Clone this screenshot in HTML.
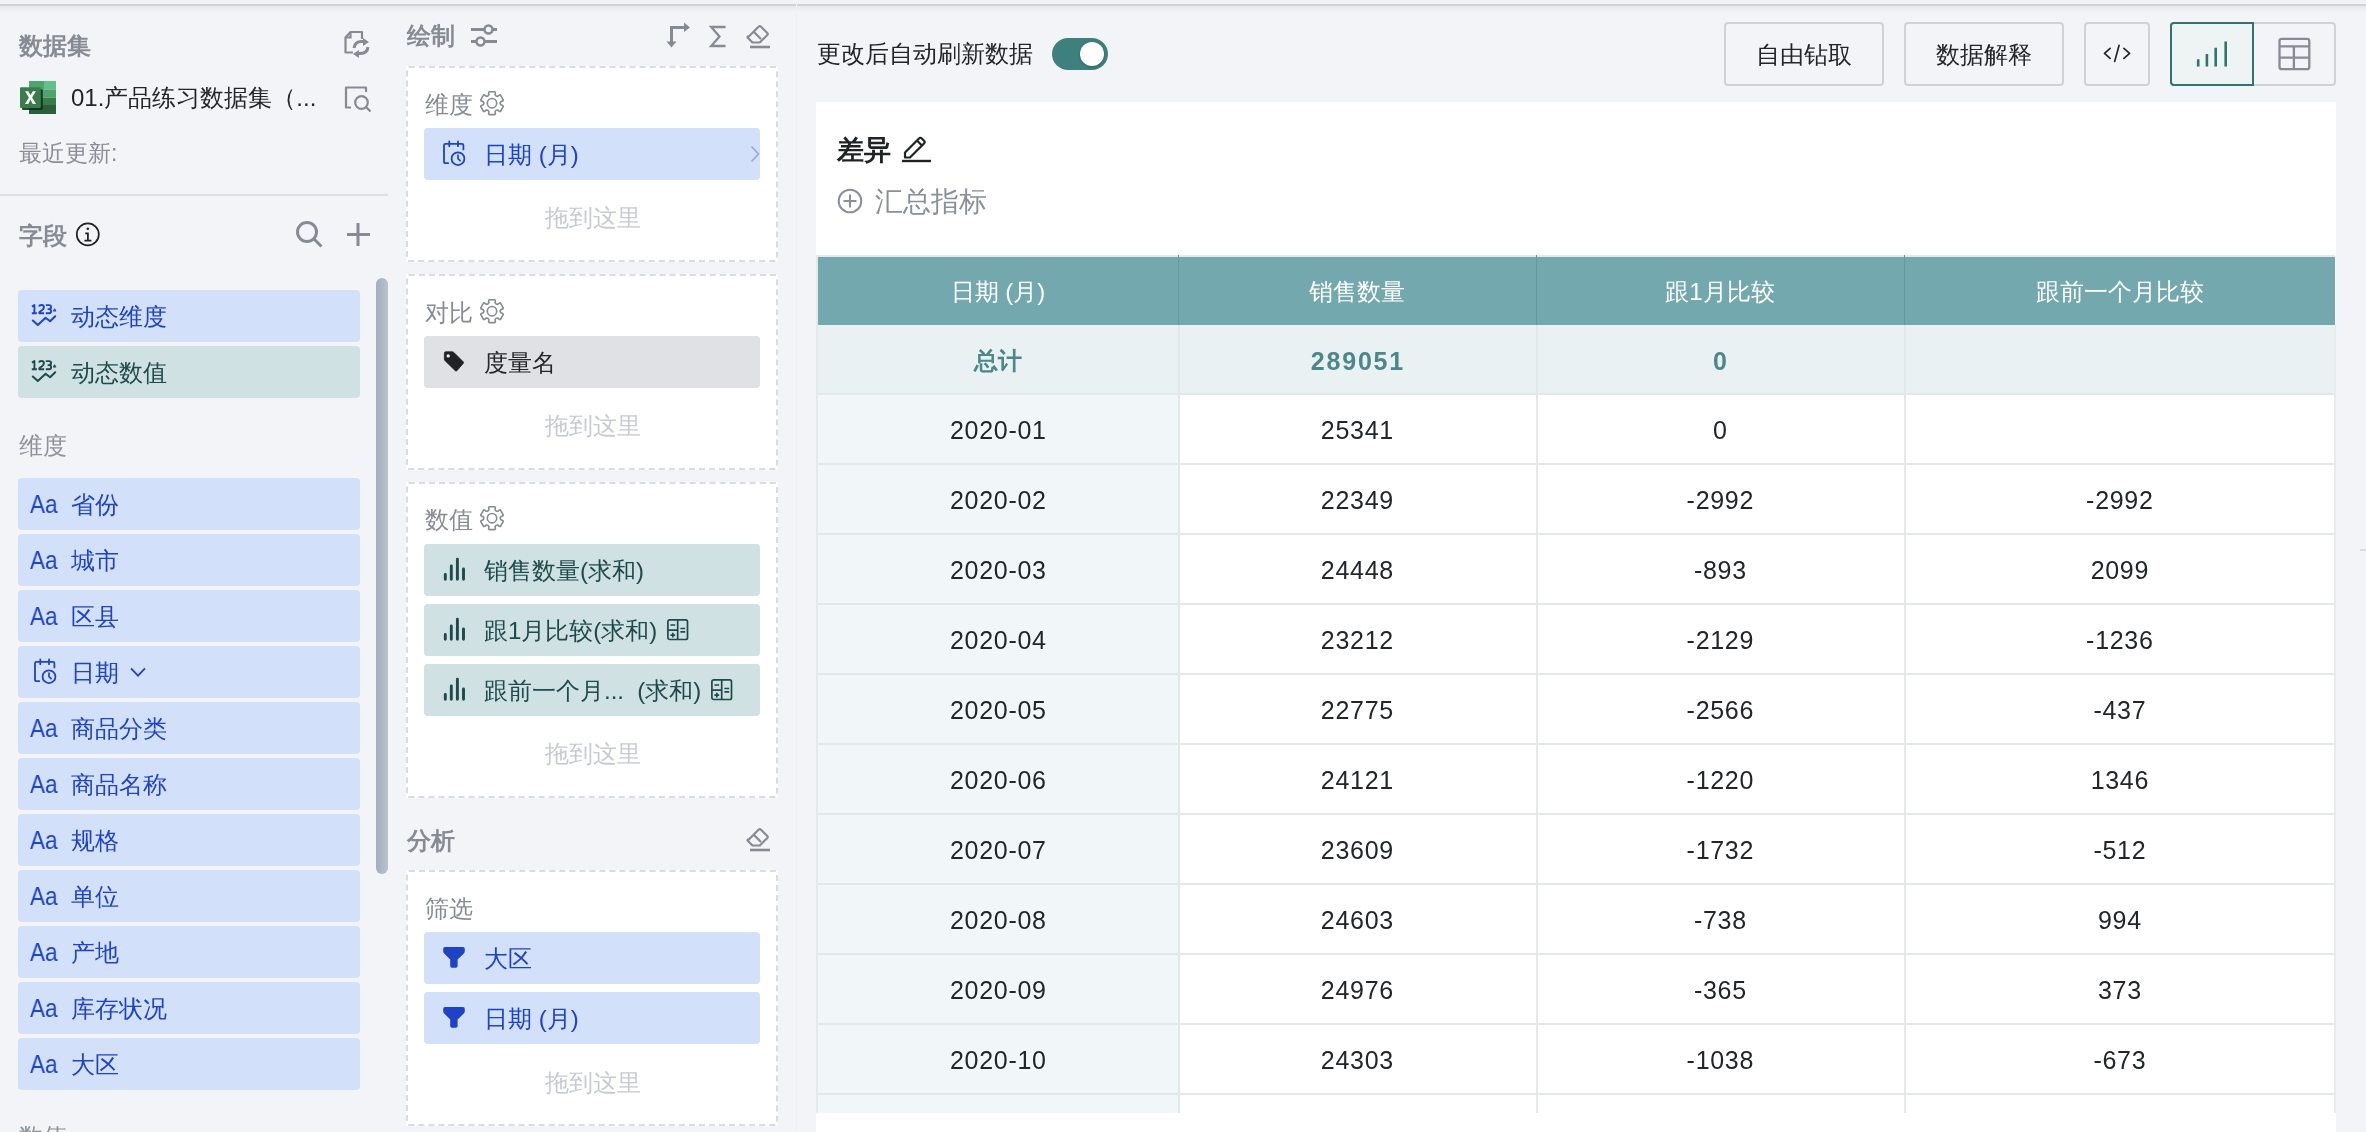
<!DOCTYPE html>
<html><head><meta charset="utf-8"><style>
html,body{margin:0;padding:0}
body{width:2366px;height:1132px;overflow:hidden;position:relative;background:#f3f4f8;font-family:"Liberation Sans",sans-serif}
.t{position:absolute;white-space:nowrap;will-change:transform}
svg{display:block}
</style></head><body>
<div style="position:absolute;left:0px;top:0px;width:2366px;height:4px;background:#f2f3f6"></div>
<div style="position:absolute;left:0px;top:4px;width:2366px;height:2px;background:#d0d2d6"></div>
<div style="position:absolute;left:0px;top:6px;width:2366px;height:6px;background:linear-gradient(#e6e8ec,rgba(243,244,248,0))"></div>
<div class="t" style="left:19px;top:34px;font-size:24px;line-height:24px;color:#868b94;font-weight:700;">数据集</div>
<svg style="position:absolute;left:340px;top:28px" width="34" height="34" viewBox="0 0 34 34"><path d="M13 24.5H5.5V9.5L10.5 4H22V11" fill="none" stroke="#858a93" stroke-width="2.2" stroke-linejoin="round"/><path d="M5.5 9.5H10.5V4" fill="none" stroke="#858a93" stroke-width="2.2"/><path d="M14 20c0.5-4 3-6.5 7.5-6.5h3" fill="none" stroke="#858a93" stroke-width="3"/><path d="M23 10l6 4-6 4z" fill="#858a93"/><path d="M28 19c-0.5 4-3 6.5-7.5 6.5h-3" fill="none" stroke="#858a93" stroke-width="3"/><path d="M19 30l-6-4 6-4z" fill="#858a93"/></svg>
<svg style="position:absolute;left:20px;top:81px" width="37" height="34" viewBox="0 0 37 34"><rect x="9" y="0" width="15" height="8.8" fill="#4fa36f"/><rect x="24" y="0" width="12" height="8.8" fill="#62c088"/><rect x="9" y="8.8" width="27" height="7.8" fill="#4fa36f"/><rect x="9" y="16.6" width="27" height="7.4" fill="#377d4a"/><rect x="9" y="24" width="27" height="9" fill="#2b5e3b"/><rect x="2" y="8.3" width="20.8" height="20.6" rx="1" fill="#14301f" opacity="0.9"/><rect x="0" y="6.3" width="20.8" height="20.6" rx="1" fill="#3a7d4a"/><path d="M5.1 10.2h3.1l2.3 4.1 2.3-4.1h3.1l-3.8 6.4 3.9 6.4h-3.2l-2.3-4.2-2.3 4.2H5l3.9-6.4z" fill="#fff"/></svg>
<div class="t" style="left:71px;top:86px;font-size:24px;line-height:24px;color:#222629;font-weight:400;">01.产品练习数据集（...</div>
<svg style="position:absolute;left:340px;top:82px" width="36" height="36" viewBox="0 0 36 36"><path d="M11 25.5H6V5.5H26V10" fill="none" stroke="#858a93" stroke-width="2.2" stroke-linejoin="round"/><circle cx="21.5" cy="20.5" r="6.3" fill="none" stroke="#858a93" stroke-width="2.2"/><path d="M26 25l4.5 4.5" stroke="#858a93" stroke-width="2.2"/></svg>
<div class="t" style="left:19px;top:142px;font-size:23px;line-height:23px;color:#8a8f97;font-weight:400;">最近更新:</div>
<div style="position:absolute;left:0px;top:194px;width:388px;height:2px;background:#dcdfe4"></div>
<div class="t" style="left:19px;top:224px;font-size:24px;line-height:24px;color:#868b94;font-weight:700;">字段</div>
<svg style="position:absolute;left:75px;top:222px" width="26" height="26" viewBox="0 0 26 26"><circle cx="12.8" cy="12.4" r="11" fill="none" stroke="#1f2226" stroke-width="1.7"/><circle cx="12.8" cy="6.7" r="1.3" fill="#1f2226"/><path d="M10.2 11.3h2.7v7.4M9.4 18.7h7" fill="none" stroke="#1f2226" stroke-width="1.8"/></svg>
<svg style="position:absolute;left:294px;top:219px" width="32" height="32" viewBox="0 0 32 32"><circle cx="13" cy="13" r="9.5" fill="none" stroke="#858a93" stroke-width="3"/><path d="M20 20l7.5 7.5" stroke="#858a93" stroke-width="3"/></svg>
<svg style="position:absolute;left:345px;top:221px" width="26" height="26" viewBox="0 0 26 26"><path d="M13 2v23M2 13.5h23" stroke="#858a93" stroke-width="3"/></svg>
<div style="position:absolute;left:18px;top:290px;width:342px;height:52px;background:#d3e0fa;border-radius:4px"></div>
<svg style="position:absolute;left:24px;top:296px" width="40" height="40" viewBox="0 0 40 40"><path d="M8 10.6L10.4 9V17.2M7.8 17.2H12.9" fill="none" stroke="#1f43c6" stroke-width="1.9" stroke-linejoin="round"/><path d="M15 10.6Q15.4 9 17.4 9Q19.9 9 19.9 11.3Q19.9 12.9 18.3 14L15.3 16.2V17.2H20.1" fill="none" stroke="#1f43c6" stroke-width="1.9" stroke-linejoin="round"/><path d="M21.8 9.1H25Q27.1 9.1 27.1 11.1Q27.1 13.1 25 13.1H23.6M25 13.1Q27.1 13.1 27.1 15.2Q27.1 17.2 25 17.2H21.8" fill="none" stroke="#1f43c6" stroke-width="1.9" stroke-linejoin="round"/><path d="M29.2 15.1L30.6 12.7L32 15.1Z" fill="#1f43c6" stroke="#1f43c6" stroke-width="0.8" stroke-linejoin="round"/><path d="M8.8 24.5L13.8 28.9L21.6 21.7L26.1 25.2L31.2 20.3" fill="none" stroke="#1f43c6" stroke-width="2" stroke-linejoin="round" stroke-linecap="round"/></svg>
<div class="t" style="left:71px;top:305px;font-size:24px;line-height:24px;color:#1f43c6;font-weight:400;">动态维度</div>
<div style="position:absolute;left:18px;top:346px;width:342px;height:52px;background:#cfe1e2;border-radius:4px"></div>
<svg style="position:absolute;left:24px;top:352px" width="40" height="40" viewBox="0 0 40 40"><path d="M8 10.6L10.4 9V17.2M7.8 17.2H12.9" fill="none" stroke="#1e4a4b" stroke-width="1.9" stroke-linejoin="round"/><path d="M15 10.6Q15.4 9 17.4 9Q19.9 9 19.9 11.3Q19.9 12.9 18.3 14L15.3 16.2V17.2H20.1" fill="none" stroke="#1e4a4b" stroke-width="1.9" stroke-linejoin="round"/><path d="M21.8 9.1H25Q27.1 9.1 27.1 11.1Q27.1 13.1 25 13.1H23.6M25 13.1Q27.1 13.1 27.1 15.2Q27.1 17.2 25 17.2H21.8" fill="none" stroke="#1e4a4b" stroke-width="1.9" stroke-linejoin="round"/><path d="M29.2 15.1L30.6 12.7L32 15.1Z" fill="#1e4a4b" stroke="#1e4a4b" stroke-width="0.8" stroke-linejoin="round"/><path d="M8.8 24.5L13.8 28.9L21.6 21.7L26.1 25.2L31.2 20.3" fill="none" stroke="#1e4a4b" stroke-width="2" stroke-linejoin="round" stroke-linecap="round"/></svg>
<div class="t" style="left:71px;top:361px;font-size:24px;line-height:24px;color:#1e4a4b;font-weight:400;">动态数值</div>
<div class="t" style="left:19px;top:434px;font-size:24px;line-height:24px;color:#8d9199;font-weight:400;">维度</div>
<div style="position:absolute;left:18px;top:478px;width:342px;height:52px;background:#d3e0fa;border-radius:4px"></div>
<div class="t" style="left:30px;top:492px;font-size:25px;line-height:25px;color:#1f43c6;transform:scaleX(0.9);transform-origin:left">Aa</div>
<div class="t" style="left:71px;top:493px;font-size:24px;line-height:24px;color:#1f43c6;font-weight:400;">省份</div>
<div style="position:absolute;left:18px;top:534px;width:342px;height:52px;background:#d3e0fa;border-radius:4px"></div>
<div class="t" style="left:30px;top:548px;font-size:25px;line-height:25px;color:#1f43c6;transform:scaleX(0.9);transform-origin:left">Aa</div>
<div class="t" style="left:71px;top:549px;font-size:24px;line-height:24px;color:#1f43c6;font-weight:400;">城市</div>
<div style="position:absolute;left:18px;top:590px;width:342px;height:52px;background:#d3e0fa;border-radius:4px"></div>
<div class="t" style="left:30px;top:604px;font-size:25px;line-height:25px;color:#1f43c6;transform:scaleX(0.9);transform-origin:left">Aa</div>
<div class="t" style="left:71px;top:605px;font-size:24px;line-height:24px;color:#1f43c6;font-weight:400;">区县</div>
<div style="position:absolute;left:18px;top:646px;width:342px;height:52px;background:#d3e0fa;border-radius:4px"></div>
<svg style="position:absolute;left:30.5px;top:646px" width="32" height="44" viewBox="0 0 32 44"><path d="M8.2 35.2H5.5Q4 35.2 4 33.7V17.4Q4 15.9 5.5 15.9H21.9Q23.4 15.9 23.4 17.4V21.4" fill="none" stroke="#1f43c6" stroke-width="1.8" stroke-linecap="round" stroke-linejoin="round"/><path d="M9.3 13.4v4.8M18 13.4v4.8" stroke="#1f43c6" stroke-width="1.8" stroke-linecap="round"/><circle cx="18" cy="30.7" r="6.4" fill="none" stroke="#1f43c6" stroke-width="1.8"/><path d="M18 27.2v3.4l2.1 2" fill="none" stroke="#1f43c6" stroke-width="1.7" stroke-linecap="round" stroke-linejoin="round"/></svg>
<div class="t" style="left:71px;top:661px;font-size:24px;line-height:24px;color:#1f43c6;font-weight:400;">日期</div>
<svg style="position:absolute;left:128px;top:664px" width="20" height="14" viewBox="0 0 20 14"><path d="M3 4.3l7 7.4 7-7.4" fill="none" stroke="#1f43c6" stroke-width="1.8"/></svg>
<div style="position:absolute;left:18px;top:702px;width:342px;height:52px;background:#d3e0fa;border-radius:4px"></div>
<div class="t" style="left:30px;top:716px;font-size:25px;line-height:25px;color:#1f43c6;transform:scaleX(0.9);transform-origin:left">Aa</div>
<div class="t" style="left:71px;top:717px;font-size:24px;line-height:24px;color:#1f43c6;font-weight:400;">商品分类</div>
<div style="position:absolute;left:18px;top:758px;width:342px;height:52px;background:#d3e0fa;border-radius:4px"></div>
<div class="t" style="left:30px;top:772px;font-size:25px;line-height:25px;color:#1f43c6;transform:scaleX(0.9);transform-origin:left">Aa</div>
<div class="t" style="left:71px;top:773px;font-size:24px;line-height:24px;color:#1f43c6;font-weight:400;">商品名称</div>
<div style="position:absolute;left:18px;top:814px;width:342px;height:52px;background:#d3e0fa;border-radius:4px"></div>
<div class="t" style="left:30px;top:828px;font-size:25px;line-height:25px;color:#1f43c6;transform:scaleX(0.9);transform-origin:left">Aa</div>
<div class="t" style="left:71px;top:829px;font-size:24px;line-height:24px;color:#1f43c6;font-weight:400;">规格</div>
<div style="position:absolute;left:18px;top:870px;width:342px;height:52px;background:#d3e0fa;border-radius:4px"></div>
<div class="t" style="left:30px;top:884px;font-size:25px;line-height:25px;color:#1f43c6;transform:scaleX(0.9);transform-origin:left">Aa</div>
<div class="t" style="left:71px;top:885px;font-size:24px;line-height:24px;color:#1f43c6;font-weight:400;">单位</div>
<div style="position:absolute;left:18px;top:926px;width:342px;height:52px;background:#d3e0fa;border-radius:4px"></div>
<div class="t" style="left:30px;top:940px;font-size:25px;line-height:25px;color:#1f43c6;transform:scaleX(0.9);transform-origin:left">Aa</div>
<div class="t" style="left:71px;top:941px;font-size:24px;line-height:24px;color:#1f43c6;font-weight:400;">产地</div>
<div style="position:absolute;left:18px;top:982px;width:342px;height:52px;background:#d3e0fa;border-radius:4px"></div>
<div class="t" style="left:30px;top:996px;font-size:25px;line-height:25px;color:#1f43c6;transform:scaleX(0.9);transform-origin:left">Aa</div>
<div class="t" style="left:71px;top:997px;font-size:24px;line-height:24px;color:#1f43c6;font-weight:400;">库存状况</div>
<div style="position:absolute;left:18px;top:1038px;width:342px;height:52px;background:#d3e0fa;border-radius:4px"></div>
<div class="t" style="left:30px;top:1052px;font-size:25px;line-height:25px;color:#1f43c6;transform:scaleX(0.9);transform-origin:left">Aa</div>
<div class="t" style="left:71px;top:1053px;font-size:24px;line-height:24px;color:#1f43c6;font-weight:400;">大区</div>
<div class="t" style="left:19px;top:1125px;font-size:24px;line-height:24px;color:#8d9199;font-weight:400;">数值</div>
<div style="position:absolute;left:376px;top:278px;width:12px;height:596px;background:linear-gradient(90deg,#a3aebb,#b9c2cc);border-radius:6px"></div>
<div class="t" style="left:407px;top:24px;font-size:24px;line-height:24px;color:#868b94;font-weight:700;">绘制</div>
<svg style="position:absolute;left:469px;top:22px" width="30" height="28" viewBox="0 0 30 28"><path d="M2 7.5h13M24 7.5h4M2 19.5h5M16 19.5h12" stroke="#858a93" stroke-width="3"/><circle cx="19.5" cy="7.5" r="4" fill="none" stroke="#858a93" stroke-width="2.5"/><circle cx="11.5" cy="19.5" r="4" fill="none" stroke="#858a93" stroke-width="2.5"/></svg>
<svg style="position:absolute;left:665px;top:22px" width="28" height="28" viewBox="0 0 28 28"><path d="M6.5 21V5.5H20" fill="none" stroke="#858a93" stroke-width="3"/><path d="M19 0.5l6 5-6 4.5z" fill="#858a93"/><path d="M1.5 19.5h10l-5 6z" fill="#858a93"/></svg>
<svg style="position:absolute;left:707px;top:23px" width="22" height="26" viewBox="0 0 22 26"><path d="M18.5 4H4.2l8.3 9.5-8.3 9.5h14.3" fill="none" stroke="#858a93" stroke-width="2.3" stroke-linejoin="miter"/></svg>
<svg style="position:absolute;left:745px;top:21px" width="28" height="28" viewBox="0 0 28 28"><path d="M2.8 16.5l11-11a1.5 1.5 0 0 1 2 0l6.5 6.5a1.5 1.5 0 0 1 0 2l-7.5 7.5H7.5l-4.7-4.7a1 1 0 0 1 0-1.3z" fill="none" stroke="#858a93" stroke-width="2.2" stroke-linejoin="round"/><path d="M8.5 10.5l7.5 7.5" stroke="#858a93" stroke-width="2.2"/><path d="M5 26h20" stroke="#858a93" stroke-width="2.6"/></svg>
<div style="position:absolute;left:406px;top:66px;width:368px;height:192px;background:#fff;border:2px dashed #d9dce1;border-radius:3px"></div>
<div class="t" style="left:425px;top:93px;font-size:24px;line-height:24px;color:#868b94;font-weight:400;">维度</div>
<svg style="position:absolute;left:480px;top:91px" width="24" height="25" viewBox="0 0 24 25"><path d="M8.90 3.80 L8.65 1.90 Q8.50 0.80 9.60 0.80 L14.40 0.80 Q15.50 0.80 15.35 1.90 L15.10 3.80 Q15.80 5.62 17.72 5.32 L17.72 5.32 L19.25 4.15 Q20.12 3.47 20.67 4.42 L23.07 8.58 Q23.62 9.53 22.60 9.95 L20.82 10.68 Q19.60 12.20 20.82 13.72 L20.82 13.72 L22.60 14.45 Q23.62 14.87 23.07 15.82 L20.67 19.98 Q20.12 20.93 19.25 20.25 L17.72 19.08 Q15.80 18.78 15.10 20.60 L15.10 20.60 L15.35 22.50 Q15.50 23.60 14.40 23.60 L9.60 23.60 Q8.50 23.60 8.65 22.50 L8.90 20.60 Q8.20 18.78 6.28 19.08 L6.28 19.08 L4.75 20.25 Q3.88 20.93 3.33 19.98 L0.93 15.82 Q0.38 14.87 1.40 14.45 L3.18 13.72 Q4.40 12.20 3.18 10.68 L3.18 10.68 L1.40 9.95 Q0.38 9.53 0.93 8.58 L3.33 4.42 Q3.88 3.47 4.75 4.15 L6.28 5.32 Q8.20 5.62 8.90 3.80 Z" fill="none" stroke="#858a93" stroke-width="1.6" stroke-linejoin="round"/><circle cx="12" cy="12.2" r="4.7" fill="none" stroke="#858a93" stroke-width="1.6"/></svg>
<div style="position:absolute;left:424px;top:128px;width:336px;height:52px;background:#d3e0fa;border-radius:4px"></div>
<svg style="position:absolute;left:440.3px;top:128px" width="32" height="44" viewBox="0 0 32 44"><path d="M8.2 35.2H5.5Q4 35.2 4 33.7V17.4Q4 15.9 5.5 15.9H21.9Q23.4 15.9 23.4 17.4V21.4" fill="none" stroke="#1f43c6" stroke-width="1.8" stroke-linecap="round" stroke-linejoin="round"/><path d="M9.3 13.4v4.8M18 13.4v4.8" stroke="#1f43c6" stroke-width="1.8" stroke-linecap="round"/><circle cx="18" cy="30.7" r="6.4" fill="none" stroke="#1f43c6" stroke-width="1.8"/><path d="M18 27.2v3.4l2.1 2" fill="none" stroke="#1f43c6" stroke-width="1.7" stroke-linecap="round" stroke-linejoin="round"/></svg>
<div class="t" style="left:484px;top:143px;font-size:24px;line-height:24px;color:#1f43c6;font-weight:400;">日期 (月)</div>
<svg style="position:absolute;left:750px;top:145px" width="10" height="18" viewBox="0 0 10 18"><path d="M1.5 1.5l7 7.5-7 7.5" fill="none" stroke="#8fa8e8" stroke-width="1.6"/></svg>
<div class="t" style="left:545px;top:206px;font-size:24px;line-height:24px;color:#c6cad1;font-weight:400;">拖到这里</div>
<div style="position:absolute;left:406px;top:274px;width:368px;height:192px;background:#fff;border:2px dashed #d9dce1;border-radius:3px"></div>
<div class="t" style="left:425px;top:301px;font-size:24px;line-height:24px;color:#868b94;font-weight:400;">对比</div>
<svg style="position:absolute;left:480px;top:299px" width="24" height="25" viewBox="0 0 24 25"><path d="M8.90 3.80 L8.65 1.90 Q8.50 0.80 9.60 0.80 L14.40 0.80 Q15.50 0.80 15.35 1.90 L15.10 3.80 Q15.80 5.62 17.72 5.32 L17.72 5.32 L19.25 4.15 Q20.12 3.47 20.67 4.42 L23.07 8.58 Q23.62 9.53 22.60 9.95 L20.82 10.68 Q19.60 12.20 20.82 13.72 L20.82 13.72 L22.60 14.45 Q23.62 14.87 23.07 15.82 L20.67 19.98 Q20.12 20.93 19.25 20.25 L17.72 19.08 Q15.80 18.78 15.10 20.60 L15.10 20.60 L15.35 22.50 Q15.50 23.60 14.40 23.60 L9.60 23.60 Q8.50 23.60 8.65 22.50 L8.90 20.60 Q8.20 18.78 6.28 19.08 L6.28 19.08 L4.75 20.25 Q3.88 20.93 3.33 19.98 L0.93 15.82 Q0.38 14.87 1.40 14.45 L3.18 13.72 Q4.40 12.20 3.18 10.68 L3.18 10.68 L1.40 9.95 Q0.38 9.53 0.93 8.58 L3.33 4.42 Q3.88 3.47 4.75 4.15 L6.28 5.32 Q8.20 5.62 8.90 3.80 Z" fill="none" stroke="#858a93" stroke-width="1.6" stroke-linejoin="round"/><circle cx="12" cy="12.2" r="4.7" fill="none" stroke="#858a93" stroke-width="1.6"/></svg>
<div style="position:absolute;left:424px;top:336px;width:336px;height:52px;background:#dfe1e4;border-radius:4px"></div>
<svg style="position:absolute;left:436px;top:340px" width="40" height="40" viewBox="0 0 40 40"><path d="M8.4 13.2Q8.4 11.8 9.8 11.8H16.2Q17.2 11.8 17.9 12.5L27.2 21.8Q28 22.6 27.2 23.4L20.9 30.7Q20.1 31.5 19.3 30.7L9.1 20.8Q8.4 20.1 8.4 19.1Z" fill="#202326" stroke="#202326" stroke-width="0.8" stroke-linejoin="round"/><circle cx="12.2" cy="15.9" r="1.7" fill="#eef0f2"/></svg>
<div class="t" style="left:484px;top:351px;font-size:24px;line-height:24px;color:#222629;font-weight:400;">度量名</div>
<div class="t" style="left:545px;top:414px;font-size:24px;line-height:24px;color:#c6cad1;font-weight:400;">拖到这里</div>
<div style="position:absolute;left:406px;top:482px;width:368px;height:312px;background:#fff;border:2px dashed #d9dce1;border-radius:3px"></div>
<div class="t" style="left:425px;top:508px;font-size:24px;line-height:24px;color:#868b94;font-weight:400;">数值</div>
<svg style="position:absolute;left:480px;top:506px" width="24" height="25" viewBox="0 0 24 25"><path d="M8.90 3.80 L8.65 1.90 Q8.50 0.80 9.60 0.80 L14.40 0.80 Q15.50 0.80 15.35 1.90 L15.10 3.80 Q15.80 5.62 17.72 5.32 L17.72 5.32 L19.25 4.15 Q20.12 3.47 20.67 4.42 L23.07 8.58 Q23.62 9.53 22.60 9.95 L20.82 10.68 Q19.60 12.20 20.82 13.72 L20.82 13.72 L22.60 14.45 Q23.62 14.87 23.07 15.82 L20.67 19.98 Q20.12 20.93 19.25 20.25 L17.72 19.08 Q15.80 18.78 15.10 20.60 L15.10 20.60 L15.35 22.50 Q15.50 23.60 14.40 23.60 L9.60 23.60 Q8.50 23.60 8.65 22.50 L8.90 20.60 Q8.20 18.78 6.28 19.08 L6.28 19.08 L4.75 20.25 Q3.88 20.93 3.33 19.98 L0.93 15.82 Q0.38 14.87 1.40 14.45 L3.18 13.72 Q4.40 12.20 3.18 10.68 L3.18 10.68 L1.40 9.95 Q0.38 9.53 0.93 8.58 L3.33 4.42 Q3.88 3.47 4.75 4.15 L6.28 5.32 Q8.20 5.62 8.90 3.80 Z" fill="none" stroke="#858a93" stroke-width="1.6" stroke-linejoin="round"/><circle cx="12" cy="12.2" r="4.7" fill="none" stroke="#858a93" stroke-width="1.6"/></svg>
<div style="position:absolute;left:424px;top:544px;width:336px;height:52px;background:#cfe1e2;border-radius:4px"></div>
<svg style="position:absolute;left:436px;top:544px" width="40" height="44" viewBox="0 0 40 44"><path d="M9.3 35.3v-4.8M15.3 35.3v-13.4M21.4 35.3v-20M27.5 35.3v-10.4" stroke="#1e4a4b" stroke-width="2.9" stroke-linecap="round"/></svg>
<div class="t" style="left:484px;top:559px;font-size:24px;line-height:24px;color:#1e4a4b;font-weight:400;">销售数量(求和)</div>
<div style="position:absolute;left:424px;top:604px;width:336px;height:52px;background:#cfe1e2;border-radius:4px"></div>
<svg style="position:absolute;left:436px;top:604px" width="40" height="44" viewBox="0 0 40 44"><path d="M9.3 35.3v-4.8M15.3 35.3v-13.4M21.4 35.3v-20M27.5 35.3v-10.4" stroke="#1e4a4b" stroke-width="2.9" stroke-linecap="round"/></svg>
<div class="t" style="left:484px;top:619px;font-size:24px;line-height:24px;color:#1e4a4b;font-weight:400;">跟1月比较(求和)</div>
<svg style="position:absolute;left:665px;top:617px" width="26" height="26" viewBox="0 0 26 26"><rect x="2.9" y="2.9" width="19.6" height="19.6" rx="1.8" fill="none" stroke="#1e4a4b" stroke-width="1.7"/><path d="M12.7 2.9v19.6M2.9 13.1h9.8M5.4 8h4.8M15.4 11.5h4.8M15.4 14.9h4.8M5.4 18.2h4.8M7.8 15.8v4.8" stroke="#1e4a4b" stroke-width="1.7"/></svg>
<div style="position:absolute;left:424px;top:664px;width:336px;height:52px;background:#cfe1e2;border-radius:4px"></div>
<svg style="position:absolute;left:436px;top:664px" width="40" height="44" viewBox="0 0 40 44"><path d="M9.3 35.3v-4.8M15.3 35.3v-13.4M21.4 35.3v-20M27.5 35.3v-10.4" stroke="#1e4a4b" stroke-width="2.9" stroke-linecap="round"/></svg>
<div class="t" style="left:484px;top:679px;font-size:24px;line-height:24px;color:#1e4a4b;font-weight:400;">跟前一个月...&nbsp;&nbsp;(求和)</div>
<svg style="position:absolute;left:709px;top:677px" width="26" height="26" viewBox="0 0 26 26"><rect x="2.9" y="2.9" width="19.6" height="19.6" rx="1.8" fill="none" stroke="#1e4a4b" stroke-width="1.7"/><path d="M12.7 2.9v19.6M2.9 13.1h9.8M5.4 8h4.8M15.4 11.5h4.8M15.4 14.9h4.8M5.4 18.2h4.8M7.8 15.8v4.8" stroke="#1e4a4b" stroke-width="1.7"/></svg>
<div class="t" style="left:545px;top:742px;font-size:24px;line-height:24px;color:#c6cad1;font-weight:400;">拖到这里</div>
<div class="t" style="left:407px;top:829px;font-size:24px;line-height:24px;color:#868b94;font-weight:700;">分析</div>
<svg style="position:absolute;left:745px;top:824px" width="28" height="28" viewBox="0 0 28 28"><path d="M2.8 16.5l11-11a1.5 1.5 0 0 1 2 0l6.5 6.5a1.5 1.5 0 0 1 0 2l-7.5 7.5H7.5l-4.7-4.7a1 1 0 0 1 0-1.3z" fill="none" stroke="#858a93" stroke-width="2.2" stroke-linejoin="round"/><path d="M8.5 10.5l7.5 7.5" stroke="#858a93" stroke-width="2.2"/><path d="M5 26h20" stroke="#858a93" stroke-width="2.6"/></svg>
<div style="position:absolute;left:406px;top:870px;width:368px;height:252px;background:#fff;border:2px dashed #d9dce1;border-radius:3px"></div>
<div class="t" style="left:425px;top:897px;font-size:24px;line-height:24px;color:#868b94;font-weight:400;">筛选</div>
<div style="position:absolute;left:424px;top:932px;width:336px;height:52px;background:#d3e0fa;border-radius:4px"></div>
<svg style="position:absolute;left:436px;top:936px" width="40" height="40" viewBox="0 0 40 40"><path d="M9 11H27Q28.8 11 28.8 13V15Q28.8 16.5 27.8 17.5L21.6 23.5V30Q21.6 31.8 19.8 31.8H16Q14.2 31.8 14.2 30V23.5L8.2 17.5Q7.2 16.5 7.2 15V13Q7.2 11 9 11Z" fill="#1f43c6"/></svg>
<div class="t" style="left:484px;top:947px;font-size:24px;line-height:24px;color:#1f43c6;font-weight:400;">大区</div>
<div style="position:absolute;left:424px;top:992px;width:336px;height:52px;background:#d3e0fa;border-radius:4px"></div>
<svg style="position:absolute;left:436px;top:996px" width="40" height="40" viewBox="0 0 40 40"><path d="M9 11H27Q28.8 11 28.8 13V15Q28.8 16.5 27.8 17.5L21.6 23.5V30Q21.6 31.8 19.8 31.8H16Q14.2 31.8 14.2 30V23.5L8.2 17.5Q7.2 16.5 7.2 15V13Q7.2 11 9 11Z" fill="#1f43c6"/></svg>
<div class="t" style="left:484px;top:1007px;font-size:24px;line-height:24px;color:#1f43c6;font-weight:400;">日期 (月)</div>
<div class="t" style="left:545px;top:1071px;font-size:24px;line-height:24px;color:#c6cad1;font-weight:400;">拖到这里</div>
<div style="position:absolute;left:796px;top:0px;width:1px;height:1132px;background:#eff0f4"></div>
<div class="t" style="left:817px;top:42px;font-size:24px;line-height:24px;color:#222629;font-weight:400;">更改后自动刷新数据</div>
<div style="position:absolute;left:1052px;top:38px;width:56px;height:32px;background:#3e807d;border-radius:16px"></div>
<div style="position:absolute;left:1080px;top:42px;width:24px;height:24px;background:#fff;border-radius:12px;box-shadow:0 1px 3px rgba(0,0,0,.25)"></div>
<div style="position:absolute;left:1724px;top:22px;width:156px;height:60px;border:2px solid #cfd3d9;border-radius:4px;background:#f3f4f8"><div class="t" style="left:0;width:156px;top:19px;text-align:center;font-size:24px;line-height:24px;color:#222629">自由钻取</div></div>
<div style="position:absolute;left:1904px;top:22px;width:156px;height:60px;border:2px solid #cfd3d9;border-radius:4px;background:#f3f4f8"><div class="t" style="left:0;width:156px;top:19px;text-align:center;font-size:24px;line-height:24px;color:#222629">数据解释</div></div>
<div style="position:absolute;left:2084px;top:22px;width:62px;height:60px;border:2px solid #cfd3d9;border-radius:4px;background:#f3f4f8"><svg style="position:absolute;left:17px;top:18px" width="30" height="24" viewBox="0 0 30 24"><path d="M7.1 6.3L1.5 11.4 7.1 16.4M20.9 6.3L26.6 11.4 20.9 16.4M16.1 3.3L11.7 19.4" fill="none" stroke="#222629" stroke-width="1.7" stroke-linecap="round" stroke-linejoin="round"/></svg></div>
<div style="position:absolute;left:2170px;top:22px;width:162px;height:60px;border:2px solid #cfd3d9;border-radius:4px;background:#f3f4f8"></div>
<div style="position:absolute;left:2170px;top:22px;width:80px;height:60px;border:2px solid #30756f;border-radius:4px 0 0 4px;background:#eef3f3"></div>
<svg style="position:absolute;left:2193px;top:38px" width="36" height="32" viewBox="0 0 36 32"><path d="M5.2 28.4V21.2M13.9 28.4V16.1M22.7 28.4V9.8M32.7 28.4V3.6" stroke="#2e7570" stroke-width="2.6"/></svg>
<svg style="position:absolute;left:2276px;top:36px" width="36" height="36" viewBox="0 0 36 36"><rect x="3.5" y="2.9" width="29.8" height="30.2" rx="2.2" fill="none" stroke="#878b93" stroke-width="2.3"/><path d="M3.5 10.4h29.8M3.5 21.6h29.8M17.9 10.4v22.7" stroke="#878b93" stroke-width="2.3"/></svg>
<div style="position:absolute;left:816px;top:102px;width:1520px;height:1030px;background:#fff"></div>
<div class="t" style="left:837px;top:137px;font-size:27px;line-height:27px;color:#1f2326;font-weight:700;">差异</div>
<svg style="position:absolute;left:900px;top:134px" width="34" height="30" viewBox="0 0 34 30"><path d="M5 23.5v-5l14-14a2 2 0 0 1 2.8 0l2.2 2.2a2 2 0 0 1 0 2.8l-14 14z" fill="none" stroke="#1f2326" stroke-width="2.2" stroke-linejoin="round"/><path d="M17 6.5l5 5" stroke="#1f2326" stroke-width="2.2"/><path d="M2 27h29" stroke="#1f2326" stroke-width="2.4"/></svg>
<svg style="position:absolute;left:836px;top:187px" width="28" height="28" viewBox="0 0 28 28"><circle cx="14" cy="14" r="11.3" fill="none" stroke="#8a8f98" stroke-width="2"/><path d="M14 7.5v13M7.5 14h13" stroke="#8a8f98" stroke-width="2"/></svg>
<div class="t" style="left:875px;top:188px;font-size:28px;line-height:28px;color:#8a8f98;font-weight:400;">汇总指标</div>
<div style="position:absolute;left:816px;top:255px;width:1519px;height:2px;background:#e6e9ec"></div>
<div style="position:absolute;left:816px;top:255px;width:2px;height:858px;background:#e6e9ec"></div>
<div style="position:absolute;left:818px;top:257px;width:1517px;height:68px;background:#73a8ae"></div>
<div style="position:absolute;left:1178px;top:255px;width:1px;height:70px;background:#64999e"></div>
<div style="position:absolute;left:1536px;top:255px;width:1px;height:70px;background:#64999e"></div>
<div style="position:absolute;left:1904px;top:255px;width:1px;height:70px;background:#64999e"></div>
<div class="t" style="left:818px;width:360px;text-align:center;top:280px;font-size:24px;line-height:24px;color:#ffffff;font-weight:400;">日期 (月)</div>
<div class="t" style="left:1178px;width:358px;text-align:center;top:280px;font-size:24px;line-height:24px;color:#ffffff;font-weight:400;">销售数量</div>
<div class="t" style="left:1536px;width:368px;text-align:center;top:280px;font-size:24px;line-height:24px;color:#ffffff;font-weight:400;">跟1月比较</div>
<div class="t" style="left:1904px;width:431px;text-align:center;top:280px;font-size:24px;line-height:24px;color:#ffffff;font-weight:400;">跟前一个月比较</div>
<div style="position:absolute;left:818px;top:325px;width:1517px;height:68px;background:#eaf1f3"></div>
<div style="position:absolute;left:818px;top:325px;width:1517px;height:1px;background:#eef1f3"></div>
<div style="position:absolute;left:818px;top:393px;width:1517px;height:2px;background:#e4e8ea"></div>
<div class="t" style="left:818px;width:360px;text-align:center;top:349px;font-size:24px;line-height:24px;color:#4b878b;font-weight:700;">总计</div>
<div class="t" style="left:1178px;width:358px;text-align:center;top:349px;font-size:25px;line-height:25px;color:#4b878b;font-weight:700;letter-spacing:1.8px;text-indent:1.8px">289051</div>
<div class="t" style="left:1536px;width:368px;text-align:center;top:349px;font-size:25px;line-height:25px;color:#4b878b;font-weight:700;letter-spacing:1.8px;text-indent:1.8px">0</div>
<div class="t" style="left:1904px;width:431px;text-align:center;top:349px;font-size:25px;line-height:25px;color:#4b878b;font-weight:700;letter-spacing:1.8px;text-indent:1.8px"></div>
<div style="position:absolute;left:818px;top:395px;width:360px;height:68px;background:#f1f6f8"></div>
<div style="position:absolute;left:818px;top:463px;width:1517px;height:2px;background:#e5e8eb"></div>
<div class="t" style="left:818px;width:360px;text-align:center;top:418px;font-size:25px;line-height:25px;color:#222629;font-weight:400;letter-spacing:0.7px;text-indent:0.7px">2020-01</div>
<div class="t" style="left:1178px;width:358px;text-align:center;top:418px;font-size:25px;line-height:25px;color:#222629;font-weight:400;letter-spacing:0.7px;text-indent:0.7px">25341</div>
<div class="t" style="left:1536px;width:368px;text-align:center;top:418px;font-size:25px;line-height:25px;color:#222629;font-weight:400;letter-spacing:0.7px;text-indent:0.7px">0</div>
<div class="t" style="left:1904px;width:431px;text-align:center;top:418px;font-size:25px;line-height:25px;color:#222629;font-weight:400;letter-spacing:0.7px;text-indent:0.7px"></div>
<div style="position:absolute;left:818px;top:465px;width:360px;height:68px;background:#f1f6f8"></div>
<div style="position:absolute;left:818px;top:533px;width:1517px;height:2px;background:#e5e8eb"></div>
<div class="t" style="left:818px;width:360px;text-align:center;top:488px;font-size:25px;line-height:25px;color:#222629;font-weight:400;letter-spacing:0.7px;text-indent:0.7px">2020-02</div>
<div class="t" style="left:1178px;width:358px;text-align:center;top:488px;font-size:25px;line-height:25px;color:#222629;font-weight:400;letter-spacing:0.7px;text-indent:0.7px">22349</div>
<div class="t" style="left:1536px;width:368px;text-align:center;top:488px;font-size:25px;line-height:25px;color:#222629;font-weight:400;letter-spacing:0.7px;text-indent:0.7px">-2992</div>
<div class="t" style="left:1904px;width:431px;text-align:center;top:488px;font-size:25px;line-height:25px;color:#222629;font-weight:400;letter-spacing:0.7px;text-indent:0.7px">-2992</div>
<div style="position:absolute;left:818px;top:535px;width:360px;height:68px;background:#f1f6f8"></div>
<div style="position:absolute;left:818px;top:603px;width:1517px;height:2px;background:#e5e8eb"></div>
<div class="t" style="left:818px;width:360px;text-align:center;top:558px;font-size:25px;line-height:25px;color:#222629;font-weight:400;letter-spacing:0.7px;text-indent:0.7px">2020-03</div>
<div class="t" style="left:1178px;width:358px;text-align:center;top:558px;font-size:25px;line-height:25px;color:#222629;font-weight:400;letter-spacing:0.7px;text-indent:0.7px">24448</div>
<div class="t" style="left:1536px;width:368px;text-align:center;top:558px;font-size:25px;line-height:25px;color:#222629;font-weight:400;letter-spacing:0.7px;text-indent:0.7px">-893</div>
<div class="t" style="left:1904px;width:431px;text-align:center;top:558px;font-size:25px;line-height:25px;color:#222629;font-weight:400;letter-spacing:0.7px;text-indent:0.7px">2099</div>
<div style="position:absolute;left:818px;top:605px;width:360px;height:68px;background:#f1f6f8"></div>
<div style="position:absolute;left:818px;top:673px;width:1517px;height:2px;background:#e5e8eb"></div>
<div class="t" style="left:818px;width:360px;text-align:center;top:628px;font-size:25px;line-height:25px;color:#222629;font-weight:400;letter-spacing:0.7px;text-indent:0.7px">2020-04</div>
<div class="t" style="left:1178px;width:358px;text-align:center;top:628px;font-size:25px;line-height:25px;color:#222629;font-weight:400;letter-spacing:0.7px;text-indent:0.7px">23212</div>
<div class="t" style="left:1536px;width:368px;text-align:center;top:628px;font-size:25px;line-height:25px;color:#222629;font-weight:400;letter-spacing:0.7px;text-indent:0.7px">-2129</div>
<div class="t" style="left:1904px;width:431px;text-align:center;top:628px;font-size:25px;line-height:25px;color:#222629;font-weight:400;letter-spacing:0.7px;text-indent:0.7px">-1236</div>
<div style="position:absolute;left:818px;top:675px;width:360px;height:68px;background:#f1f6f8"></div>
<div style="position:absolute;left:818px;top:743px;width:1517px;height:2px;background:#e5e8eb"></div>
<div class="t" style="left:818px;width:360px;text-align:center;top:698px;font-size:25px;line-height:25px;color:#222629;font-weight:400;letter-spacing:0.7px;text-indent:0.7px">2020-05</div>
<div class="t" style="left:1178px;width:358px;text-align:center;top:698px;font-size:25px;line-height:25px;color:#222629;font-weight:400;letter-spacing:0.7px;text-indent:0.7px">22775</div>
<div class="t" style="left:1536px;width:368px;text-align:center;top:698px;font-size:25px;line-height:25px;color:#222629;font-weight:400;letter-spacing:0.7px;text-indent:0.7px">-2566</div>
<div class="t" style="left:1904px;width:431px;text-align:center;top:698px;font-size:25px;line-height:25px;color:#222629;font-weight:400;letter-spacing:0.7px;text-indent:0.7px">-437</div>
<div style="position:absolute;left:818px;top:745px;width:360px;height:68px;background:#f1f6f8"></div>
<div style="position:absolute;left:818px;top:813px;width:1517px;height:2px;background:#e5e8eb"></div>
<div class="t" style="left:818px;width:360px;text-align:center;top:768px;font-size:25px;line-height:25px;color:#222629;font-weight:400;letter-spacing:0.7px;text-indent:0.7px">2020-06</div>
<div class="t" style="left:1178px;width:358px;text-align:center;top:768px;font-size:25px;line-height:25px;color:#222629;font-weight:400;letter-spacing:0.7px;text-indent:0.7px">24121</div>
<div class="t" style="left:1536px;width:368px;text-align:center;top:768px;font-size:25px;line-height:25px;color:#222629;font-weight:400;letter-spacing:0.7px;text-indent:0.7px">-1220</div>
<div class="t" style="left:1904px;width:431px;text-align:center;top:768px;font-size:25px;line-height:25px;color:#222629;font-weight:400;letter-spacing:0.7px;text-indent:0.7px">1346</div>
<div style="position:absolute;left:818px;top:815px;width:360px;height:68px;background:#f1f6f8"></div>
<div style="position:absolute;left:818px;top:883px;width:1517px;height:2px;background:#e5e8eb"></div>
<div class="t" style="left:818px;width:360px;text-align:center;top:838px;font-size:25px;line-height:25px;color:#222629;font-weight:400;letter-spacing:0.7px;text-indent:0.7px">2020-07</div>
<div class="t" style="left:1178px;width:358px;text-align:center;top:838px;font-size:25px;line-height:25px;color:#222629;font-weight:400;letter-spacing:0.7px;text-indent:0.7px">23609</div>
<div class="t" style="left:1536px;width:368px;text-align:center;top:838px;font-size:25px;line-height:25px;color:#222629;font-weight:400;letter-spacing:0.7px;text-indent:0.7px">-1732</div>
<div class="t" style="left:1904px;width:431px;text-align:center;top:838px;font-size:25px;line-height:25px;color:#222629;font-weight:400;letter-spacing:0.7px;text-indent:0.7px">-512</div>
<div style="position:absolute;left:818px;top:885px;width:360px;height:68px;background:#f1f6f8"></div>
<div style="position:absolute;left:818px;top:953px;width:1517px;height:2px;background:#e5e8eb"></div>
<div class="t" style="left:818px;width:360px;text-align:center;top:908px;font-size:25px;line-height:25px;color:#222629;font-weight:400;letter-spacing:0.7px;text-indent:0.7px">2020-08</div>
<div class="t" style="left:1178px;width:358px;text-align:center;top:908px;font-size:25px;line-height:25px;color:#222629;font-weight:400;letter-spacing:0.7px;text-indent:0.7px">24603</div>
<div class="t" style="left:1536px;width:368px;text-align:center;top:908px;font-size:25px;line-height:25px;color:#222629;font-weight:400;letter-spacing:0.7px;text-indent:0.7px">-738</div>
<div class="t" style="left:1904px;width:431px;text-align:center;top:908px;font-size:25px;line-height:25px;color:#222629;font-weight:400;letter-spacing:0.7px;text-indent:0.7px">994</div>
<div style="position:absolute;left:818px;top:955px;width:360px;height:68px;background:#f1f6f8"></div>
<div style="position:absolute;left:818px;top:1023px;width:1517px;height:2px;background:#e5e8eb"></div>
<div class="t" style="left:818px;width:360px;text-align:center;top:978px;font-size:25px;line-height:25px;color:#222629;font-weight:400;letter-spacing:0.7px;text-indent:0.7px">2020-09</div>
<div class="t" style="left:1178px;width:358px;text-align:center;top:978px;font-size:25px;line-height:25px;color:#222629;font-weight:400;letter-spacing:0.7px;text-indent:0.7px">24976</div>
<div class="t" style="left:1536px;width:368px;text-align:center;top:978px;font-size:25px;line-height:25px;color:#222629;font-weight:400;letter-spacing:0.7px;text-indent:0.7px">-365</div>
<div class="t" style="left:1904px;width:431px;text-align:center;top:978px;font-size:25px;line-height:25px;color:#222629;font-weight:400;letter-spacing:0.7px;text-indent:0.7px">373</div>
<div style="position:absolute;left:818px;top:1025px;width:360px;height:68px;background:#f1f6f8"></div>
<div style="position:absolute;left:818px;top:1093px;width:1517px;height:2px;background:#e5e8eb"></div>
<div class="t" style="left:818px;width:360px;text-align:center;top:1048px;font-size:25px;line-height:25px;color:#222629;font-weight:400;letter-spacing:0.7px;text-indent:0.7px">2020-10</div>
<div class="t" style="left:1178px;width:358px;text-align:center;top:1048px;font-size:25px;line-height:25px;color:#222629;font-weight:400;letter-spacing:0.7px;text-indent:0.7px">24303</div>
<div class="t" style="left:1536px;width:368px;text-align:center;top:1048px;font-size:25px;line-height:25px;color:#222629;font-weight:400;letter-spacing:0.7px;text-indent:0.7px">-1038</div>
<div class="t" style="left:1904px;width:431px;text-align:center;top:1048px;font-size:25px;line-height:25px;color:#222629;font-weight:400;letter-spacing:0.7px;text-indent:0.7px">-673</div>
<div style="position:absolute;left:818px;top:1095px;width:360px;height:18px;background:#f1f6f8"></div>
<div class="t" style="left:818px;width:360px;text-align:center;top:1118px;font-size:25px;line-height:25px;color:#222629;font-weight:400;letter-spacing:0.7px;text-indent:0.7px"></div>
<div class="t" style="left:1178px;width:358px;text-align:center;top:1118px;font-size:25px;line-height:25px;color:#222629;font-weight:400;letter-spacing:0.7px;text-indent:0.7px"></div>
<div class="t" style="left:1536px;width:368px;text-align:center;top:1118px;font-size:25px;line-height:25px;color:#222629;font-weight:400;letter-spacing:0.7px;text-indent:0.7px"></div>
<div class="t" style="left:1904px;width:431px;text-align:center;top:1118px;font-size:25px;line-height:25px;color:#222629;font-weight:400;letter-spacing:0.7px;text-indent:0.7px"></div>
<div style="position:absolute;left:1178px;top:325px;width:2px;height:788px;background:#e5e8eb"></div>
<div style="position:absolute;left:1536px;top:325px;width:2px;height:788px;background:#e5e8eb"></div>
<div style="position:absolute;left:1904px;top:325px;width:2px;height:788px;background:#e5e8eb"></div>
<div style="position:absolute;left:2334px;top:325px;width:2px;height:788px;background:#e8ebee"></div>
<div style="position:absolute;left:2360px;top:549px;width:6px;height:2px;background:#d8dbe0"></div>
</body></html>
